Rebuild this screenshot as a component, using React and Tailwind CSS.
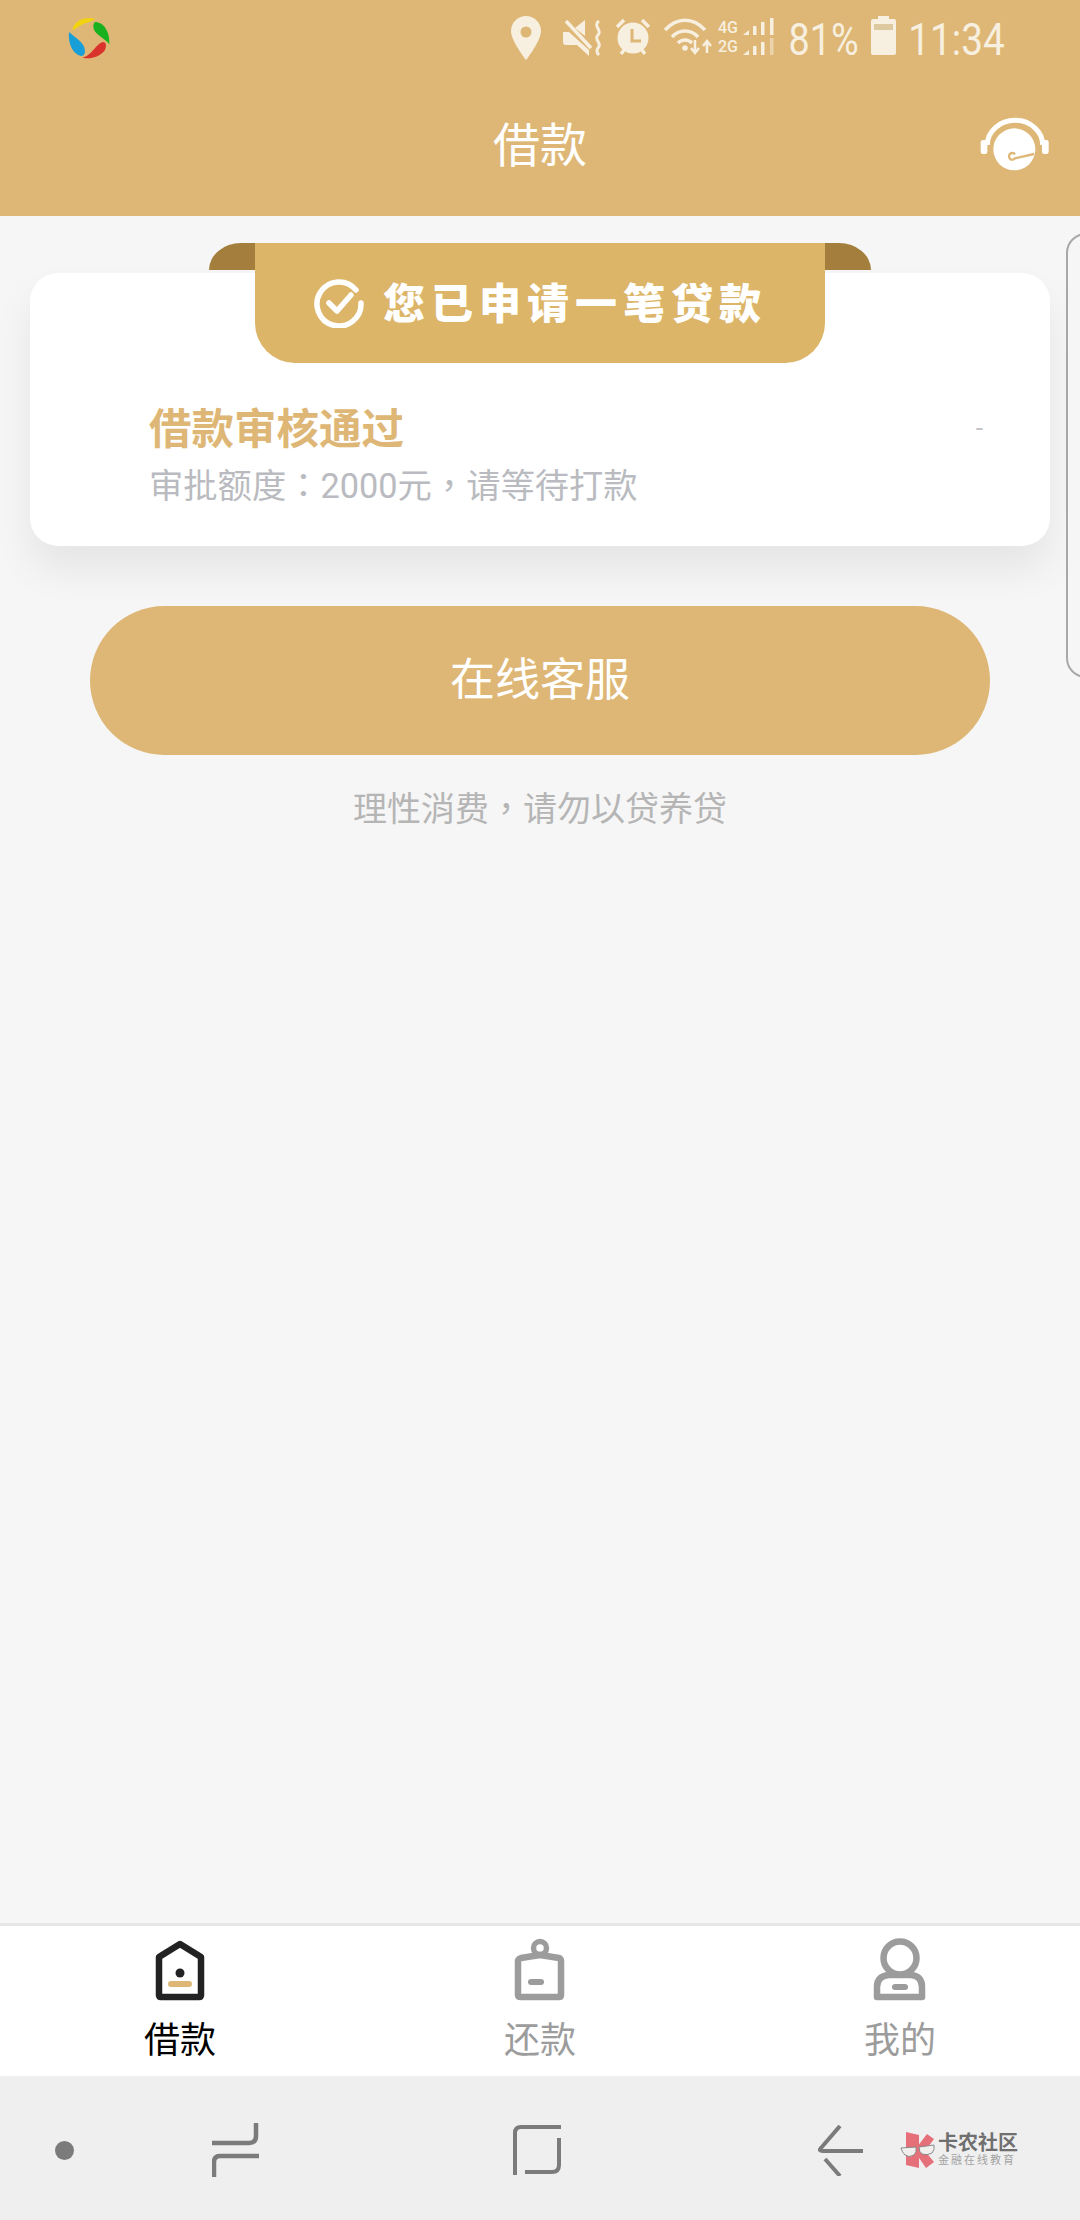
const STATUS = "#f7efdf";
const HEADER = "#deb776";

function AppLogo() {
  return (
    <svg viewBox="0 0 210 180" className="w-[70px] h-[60px]">
      <path d="M52 72C55 45 90 30 122 38C105 50 85 50 70 62C62 68 56 72 52 72Z" fill="#f2d310" />
      <path d="M120 48C145 48 165 75 163 115C150 95 115 85 115 62C115 55 117 50 120 48Z" fill="#19b21e" />
      <path d="M82 155C110 150 125 110 145 108C155 108 155 125 148 135C130 155 105 160 82 155Z" fill="#d9332b" />
      <path d="M42 78C60 95 90 110 90 135C90 145 85 150 78 150C55 145 38 115 42 78Z" fill="#189fd8" />
    </svg>
  );
}

function Pin() {
  return (
    <svg viewBox="0 0 30 44" className="w-[30px] h-[44px]">
      <path d="M15 0C6.7 0 0 6.7 0 15C0 25 15 44 15 44S30 25 30 15C30 6.7 23.3 0 15 0Z" fill={STATUS} />
      <circle cx="15" cy="16" r="5.5" fill={HEADER} />
    </svg>
  );
}

function Mute() {
  return (
    <svg viewBox="0 0 40 36" className="w-[40px] h-[36px]">
      <path d="M0 12H6L26 30V36L14 25H3Q0 25 0 22Z" fill={STATUS} />
      <path d="M12 8L22 0V16Z" fill={STATUS} />
      <path d="M3 1L28 28" stroke={STATUS} strokeWidth="3.5" />
      <path d="M36 1C29 6 40 10 35 15C30 20 40 23 35 28C33 31 34 33 36 35" fill="none" stroke={STATUS} strokeWidth="3" />
    </svg>
  );
}

function Alarm() {
  return (
    <svg viewBox="0 0 36 38" className="w-[36px] h-[38px]">
      <circle cx="18" cy="20" r="15.5" fill={STATUS} />
      <path d="M17 11V23H26" fill="none" stroke={HEADER} strokeWidth="3" />
      <path d="M2 9L9 2M27 2L34 9M6 36L9 32M30 36L27 32" stroke={STATUS} strokeWidth="3.5" />
    </svg>
  );
}

function Wifi() {
  return (
    <svg viewBox="0 0 48 38" className="w-[48px] h-[38px]">
      <path d="M1 12C13 -1 29 -1 41 12" fill="none" stroke={STATUS} strokeWidth="3.5" />
      <path d="M8 19C15 11 27 11 34 19" fill="none" stroke={STATUS} strokeWidth="3.5" />
      <path d="M14 25C18 21 24 21 28 25" fill="none" stroke={STATUS} strokeWidth="3.5" />
      <circle cx="21" cy="30" r="2.8" fill={STATUS} />
      <path d="M31 22V34M27 30L31 35L35 30M43 35V24M39 28L43 23L47 28" fill="none" stroke={STATUS} strokeWidth="2.5" />
    </svg>
  );
}

function Signal() {
  return (
    <svg viewBox="0 0 32 38" className="w-[32px] h-[38px]">
      <g fill={STATUS}>
        <path d="M0 17L6 12V17Z" />
        <rect x="10" y="8" width="3.5" height="9" />
        <rect x="18" y="4" width="3.5" height="13" />
        <rect x="27" y="0" width="3.5" height="17" />
        <path d="M0 37L6 32V37Z" />
        <rect x="10" y="28" width="3.5" height="9" />
        <rect x="18" y="24" width="3.5" height="13" />
        <rect x="27" y="20" width="3.5" height="17" opacity="0.5" />
      </g>
    </svg>
  );
}

function Battery() {
  return (
    <svg viewBox="0 0 25 39" className="w-[25px] h-[39px]">
      <path d="M7 0H18V3H23Q25 3 25 5V37Q25 39 23 39H2Q0 39 0 37V5Q0 3 2 3H7Z" fill={STATUS} />
      <rect x="3" y="8" width="19" height="6" fill="#dcc9a0" />
    </svg>
  );
}

function Headset() {
  return (
    <svg viewBox="0 0 270 225" className="w-[90px] h-[75px]">
      <path d="M52 120A83 74 0 0 1 218 120" fill="none" stroke="#fff" strokeWidth="15" />
      <rect x="32" y="105" width="20" height="42" rx="7" fill="#fff" />
      <rect x="216" y="105" width="20" height="42" rx="7" fill="#fff" />
      <circle cx="133" cy="133" r="63" fill="#fff" />
      <path d="M135 148A10 10 0 1 0 135 160L192 147" fill="none" stroke={HEADER} strokeWidth="7" />
    </svg>
  );
}

function CheckCircle() {
  return (
    <svg viewBox="0 0 50 50" className="w-[50px] h-[50px]">
      <path d="M42 12A22 22 0 1 0 47 25" fill="none" stroke="#fff" strokeWidth="5.5" strokeLinecap="round" />
      <path d="M15 25L23 33L37 17" fill="none" stroke="#fff" strokeWidth="5.5" strokeLinecap="round" strokeLinejoin="round" />
    </svg>
  );
}

function LoanIcon() {
  return (
    <svg viewBox="0 0 80 80" className="w-[80px] h-[80px]">
      <path d="M19 27L40 14L61 27V65Q61 67 59 67H21Q19 67 19 65Z" fill="none" stroke="#222" strokeWidth="6.5" strokeLinejoin="round" />
      <circle cx="40" cy="43" r="4.5" fill="#222" />
      <rect x="28" y="51" width="24" height="6" rx="3" fill="#deb776" />
    </svg>
  );
}

function RepayIcon() {
  return (
    <svg viewBox="0 0 80 80" className="w-[80px] h-[80px]">
      <circle cx="40" cy="18" r="6.5" fill="none" stroke="#9c9c9c" strokeWidth="5.5" />
      <path d="M18 31Q18 29 21 28L40 25L59 28Q61 29 61 31V65Q61 67 59 67H21Q18 67 18 65Z" fill="none" stroke="#9c9c9c" strokeWidth="6.5" strokeLinejoin="round" />
      <rect x="28" y="49" width="16" height="6" rx="3" fill="#9c9c9c" />
    </svg>
  );
}

function MeIcon() {
  return (
    <svg viewBox="0 0 80 80" className="w-[80px] h-[80px]">
      <circle cx="40" cy="28" r="16.5" fill="none" stroke="#9c9c9c" strokeWidth="6.5" />
      <path d="M17 67V57Q17 46 29 45H51Q62 46 62 57V67Z" fill="none" stroke="#9c9c9c" strokeWidth="6.5" strokeLinejoin="round" />
      <rect x="32" y="54" width="16" height="6" rx="3" fill="#9c9c9c" />
    </svg>
  );
}

function Recents() {
  return (
    <svg viewBox="0 0 47 54" className="w-[47px] h-[54px]">
      <path d="M44 0V13Q44 20 37 20H0" fill="none" stroke="#7b7b7b" strokeWidth="4.5" />
      <path d="M47 33H8Q2 33 2 39V54" fill="none" stroke="#7b7b7b" strokeWidth="4.5" />
    </svg>
  );
}

function HomeKey() {
  return (
    <svg viewBox="0 0 48 50" className="w-[48px] h-[50px]">
      <path d="M48 2H8Q2 2 2 8V50" fill="none" stroke="#7b7b7b" strokeWidth="4" />
      <path d="M46 13V40Q46 47 39 47H12" fill="none" stroke="#7b7b7b" strokeWidth="4" />
    </svg>
  );
}

function BackKey() {
  return (
    <svg viewBox="0 0 46 51" className="w-[46px] h-[51px]">
      <path d="M23 1L4 23Q1 26 6 26H46" fill="none" stroke="#7b7b7b" strokeWidth="4" />
      <path d="M8 34L23 51" fill="none" stroke="#7b7b7b" strokeWidth="4" />
    </svg>
  );
}

function CommunityLogo() {
  return (
    <div className="flex items-center">
      <svg viewBox="0 0 36 36" className="w-[36px] h-[36px]">
        <path d="M6 0L19 3V36L6 33Z" fill="#e5707a" />
        <path d="M17 15L27 2L34 7L25 19L34 30L26 36L17 23Z" fill="#e5707a" />
        <path d="M1 16L16 15Q17 20 14 23Q9 26 5 23Q2 20 1 16Z" fill="#f1eeee" stroke="#808080" strokeWidth="0.9" />
        <path d="M19 15L34 13Q35 18 32 21Q27 24 22 22Q19 20 19 15Z" fill="#f1eeee" stroke="#808080" strokeWidth="0.9" />
      </svg>
      <div className="flex flex-col ml-[2px] text-[#6f6f6f]">
        <span className="text-[20px] leading-[20px] font-bold w-[80px]">卡农社区</span>
        <span className="text-[11px] leading-[13px] tracking-[2px] mt-[1px] text-[#a3a3a3] whitespace-nowrap">金融在线教育</span>
      </div>
    </div>
  );
}

function Tab({ icon, label, color }) {
  return (
    <div className="flex-1 flex flex-col items-center pt-[4px]">
      {icon}
      <span className={`text-[36px] leading-[36px] mt-[13px] ${color}`}>{label}</span>
    </div>
  );
}

export default function App() {
  return (
    <div className="relative w-[1080px] h-[2220px] flex flex-col overflow-hidden bg-[#f6f6f6] font-['Roboto','Noto_Sans_CJK_SC',sans-serif]">
      <header className="h-[216px] shrink-0 flex flex-col bg-[#deb776]">
        <div className="h-[74px] flex items-start pt-[6px]">
          <div className="ml-[55px]"><AppLogo /></div>
          <div className="ml-auto mr-[76px] mt-[10px] flex items-start text-[#f7efdf]">
            <Pin />
            <div className="ml-[22px] mt-[4px]"><Mute /></div>
            <div className="ml-[12px] mt-[2px]"><Alarm /></div>
            <div className="ml-[13px] mt-[2px]"><Wifi /></div>
            <div className="ml-[6px] mt-[2px] w-[22px] flex flex-col text-[16px] leading-[19px] font-medium">
              <span>4G</span>
              <span>2G</span>
            </div>
            <div className="ml-[3px] mt-[2px]"><Signal /></div>
            <span className="ml-[14px] mt-[1px] w-[69px] flex justify-center text-[45px] leading-[46px] scale-x-[0.84]">81%</span>
            <div className="ml-[13px]"><Battery /></div>
            <span className="ml-[13px] mt-[1px] w-[95px] flex justify-center text-[45px] leading-[46px] scale-x-[0.86] whitespace-nowrap">11:34</span>
          </div>
        </div>
        <div className="relative flex justify-center">
          <h1 className="mt-[47px] text-[47px] leading-[50px] font-normal text-white">借款</h1>
          <div className="absolute left-[970px] top-[31px]"><Headset /></div>
        </div>
      </header>

      <main className="flex-1 flex flex-col px-[30px] pt-[57px]">
        <section className="relative h-[273px] flex items-start justify-between rounded-[28px] bg-white pl-[119px] pr-[67px] pt-[135px] shadow-[0_24px_40px_rgba(0,0,0,0.07)]">
          <div className="absolute left-[179px] top-[-30px] w-[662px] h-[27px] rounded-t-[32px_27px] bg-[#a37e3c]" />
          <div className="absolute left-[225px] top-[-30px] w-[570px] h-[120px] flex items-start pl-[59px] pt-[35px] rounded-b-[40px] bg-[#dcb568]">
            <CheckCircle />
            <span className="ml-[19px] mt-[5px] text-[42px] leading-[44px] font-black tracking-[6px] text-white whitespace-nowrap">您已申请一笔贷款</span>
          </div>
          <div className="flex flex-col">
            <h2 className="text-[42.5px] leading-[43px] font-bold text-[#deb776]">借款审核通过</h2>
            <p className="mt-[18px] text-[34.3px] leading-[34px] text-[#b9bbc0] whitespace-nowrap font-['Roboto','Noto_Sans_CJK_TC',sans-serif]">审批额度：2000元，请等待打款</p>
          </div>
          <span className="text-[26px] leading-[40px] text-[#c4c5c8]">-</span>
        </section>

        <button className="mx-[60px] mt-[60px] h-[149px] shrink-0 rounded-full bg-[#deb776] text-[45px] text-white">在线客服</button>
        <p className="mt-[34px] text-center text-[34px] leading-[40px] text-[#b5b5b5] font-['Roboto','Noto_Sans_CJK_TC',sans-serif]">理性消费，请勿以贷养贷</p>
      </main>

      <div className="absolute left-[1066px] top-[233px] w-[40px] h-[445px] rounded-l-[20px] border-[2px] border-[#a8a8a8] bg-[#f6f6f6]" />

      <nav className="h-[153px] shrink-0 flex border-t-[3px] border-[#e6e6e6] bg-white">
        <Tab icon={<LoanIcon />} label="借款" color="text-black" />
        <Tab icon={<RepayIcon />} label="还款" color="text-[#9c9c9c]" />
        <Tab icon={<MeIcon />} label="我的" color="text-[#9c9c9c]" />
      </nav>

      <div className="h-[144px] shrink-0 flex items-center pt-[4px] bg-[#efefef]">
        <span className="ml-[55px] w-[19px] h-[19px] rounded-full bg-[#7b7b7b]" />
        <div className="ml-[138px] flex"><Recents /></div>
        <div className="ml-[254px] flex"><HomeKey /></div>
        <div className="ml-[256px] flex"><BackKey /></div>
        <div className="ml-[37px]"><CommunityLogo /></div>
      </div>
    </div>
  );
}
